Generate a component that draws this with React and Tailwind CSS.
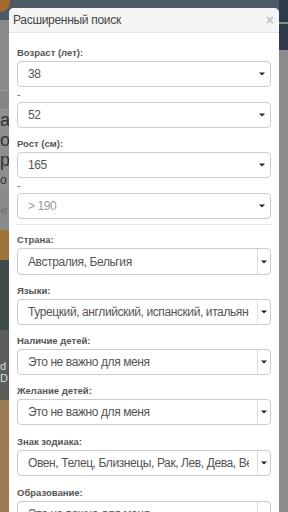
const Caret = () => (
  <svg width="6" height="4" viewBox="0 0 6 4" className="shrink-0">
    <path d="M0 0.5 L6 0.5 L3 3.5 Z" fill="#222" />
  </svg>
);

const SimpleSelect = ({ value, muted }) => (
  <div className="flex items-center h-[26px] border border-[#ccc] rounded-[4px] bg-white pl-[10px] pr-[5px]">
    <span className={`flex-1 truncate text-[12px] tracking-[-0.4px] ${muted ? "text-[#999]" : "text-[#555]"}`}>{value}</span>
    <Caret />
  </div>
);

const SplitSelect = ({ value, tall }) => (
  <div className={`flex items-stretch ${tall ? "h-[27px]" : "h-[26px]"} border border-[#ccc] rounded-[4px] bg-white`}>
    <span className="flex-1 flex items-center pl-[10px] mr-[8px] text-[12px] tracking-[-0.4px] text-[#555] whitespace-nowrap overflow-hidden">{value}</span>
    <span className="w-[13px] border-l border-[#ddd] flex items-center justify-center">
      <Caret />
    </span>
  </div>
);

const Label = ({ children }) => (
  <div className="text-[9.5px] font-bold text-[#555] leading-[12px] mb-[2px]">{children}</div>
);

const Dash = () => <div className="h-[15px] text-[10px] text-[#666] leading-[10px] pt-[3px]">-</div>;

const Background = () => (
  <div className="absolute inset-0 flex flex-col bg-[#868686]">
    <div className="h-[20px] bg-[#4d5a66] flex items-start">
      <div className="w-[10px] h-[12px] bg-[#a86a2c] rounded-br-full"></div>
    </div>
    <div className="h-[70px] bg-[#8a8a8a]"></div>
    <div className="h-[20px] bg-[#858585] border-y border-[#9a9a9a]"></div>
    <div className="h-[80px] bg-[#8f8f8f] text-[18px] text-[#333] leading-[20px]">
      <div>a</div>
      <div>o</div>
      <div>p</div>
      <div className="text-[12px]">o</div>
    </div>
    <div className="h-[40px] bg-[#8a8a8a] text-[#6a6a6a] text-[14px] pt-[10px]">«</div>
    <div className="h-[30px] bg-[#a0733b]"></div>
    <div className="h-[70px] bg-[#3f4a4a]"></div>
    <div className="h-[70px] bg-[#5a5f5a] text-[#ddd] text-[11px] leading-[12px] pt-[30px]">
      <div>d</div>
      <div>D</div>
    </div>
    <div className="flex-1 bg-[#9a7a4e]"></div>
  </div>
);

export default function App() {
  return (
    <div className="relative w-[288px] h-[512px] overflow-hidden font-['Liberation_Sans',Arial,sans-serif]">
      <Background />
      <div className="absolute right-0 top-0 w-[9px] h-full bg-[#8b8b8b]">
        <div className="h-[22px] bg-[#2f3b4a] mb-[2px]"></div>
        <div className="h-[26px] bg-[#2f3b4a]"></div>
      </div>
      <div className="absolute left-[9px] top-[8px] w-[270px] h-[520px] bg-white rounded-t-[5px] overflow-hidden">
        <div className="h-[25px] bg-[#f5f5f5] border-b border-[#e5e5e5] flex items-center justify-between pl-[4px] pr-[5px]">
          <span className="text-[12px] tracking-[-0.3px] text-[#444]">Расширенный поиск</span>
          <span className="text-[14px] font-bold text-[#c4c4c4] leading-none">×</span>
        </div>
        <div className="px-[8px] pt-[14px]">
          <Label>Возраст (лет):</Label>
          <SimpleSelect value="38" />
          <Dash />
          <SimpleSelect value="52" />
          <div className="h-[10px]"></div>
          <Label>Рост (см):</Label>
          <SimpleSelect value="165" />
          <Dash />
          <SimpleSelect value="> 190" muted />
          <div className="border-b border-[#e5e5e5] mt-[5px] mb-[9px]"></div>
          <Label>Страна:</Label>
          <SplitSelect value="Австралия, Бельгия" tall />
          <div className="h-[10px]"></div>
          <Label>Языки:</Label>
          <SplitSelect value="Турецкий, английский, испанский, итальянский" />
          <div className="h-[10px]"></div>
          <Label>Наличие детей:</Label>
          <SplitSelect value="Это не важно для меня" />
          <div className="h-[10px]"></div>
          <Label>Желание детей:</Label>
          <SplitSelect value="Это не важно для меня" />
          <div className="h-[11px]"></div>
          <Label>Знак зодиака:</Label>
          <SplitSelect value="Овен, Телец, Близнецы, Рак, Лев, Дева, Весы" />
          <div className="h-[11px]"></div>
          <Label>Образование:</Label>
          <SplitSelect value="Это не важно для меня" />
        </div>
      </div>
    </div>
  );
}
